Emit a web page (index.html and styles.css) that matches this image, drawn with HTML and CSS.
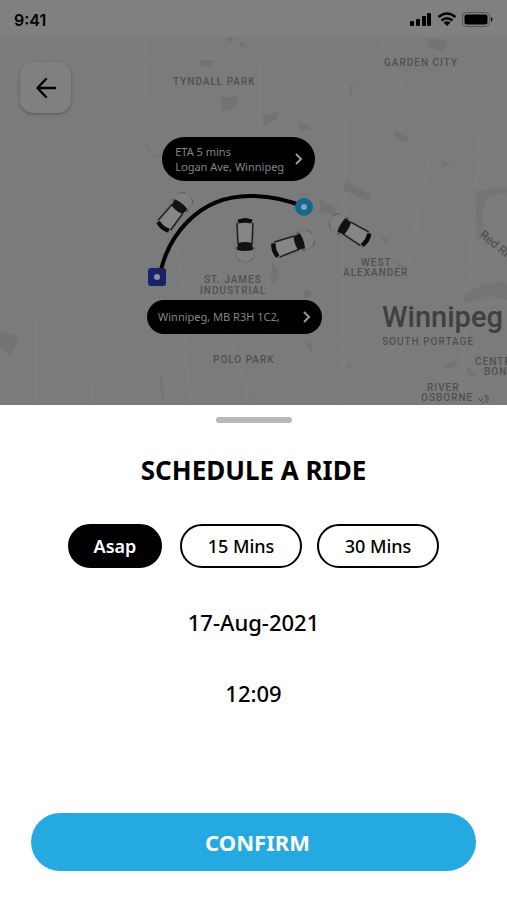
FILE: index.html
```html
<!DOCTYPE html>
<html lang="en">
<head>
<meta charset="utf-8">
<meta name="viewport" content="width=device-width, initial-scale=1">
<title>Schedule a ride</title>
<link rel="stylesheet" href="styles.css">
</head>
<body>
<main class="screen">
  <section class="map" aria-label="Map">
    <svg class="map-art" viewBox="0 0 507 405" preserveAspectRatio="xMidYMid slice">
      <defs>
        <g id="car">
          <path d="M-8 -20Q0 -24 8 -20L9 10Q10 17 6 21Q0 23 -6 21Q-10 17 -9 10Z" fill="#7f7f7f" stroke="#6c6c6c" stroke-width=".6"/>
          <path d="M-7 -20Q0 -23 7 -20L6 -17Q0 -19 -6 -17Z" fill="#0b0b0b" stroke="#0b0b0b"/>
          <path d="M-8 -17L-7 4M8 -17L7 4" stroke="#202020" stroke-width="1.5"/>
          <path d="M-6 -16Q0 -18 6 -16V3H-6Z" fill="#868686"/>
          <path d="M-7 3Q0 1 7 3L8 10Q0 12 -8 10Z" fill="#111"/>
          <path d="M-8 7L-10 9M8 7L10 9" stroke="#444" stroke-width="1"/>
          <path d="M-8 18Q-7 20 -4 21M8 18Q7 20 4 21" fill="none" stroke="#505050" stroke-width=".7"/>
        </g>
      </defs>
      <rect width="507" height="405" fill="#7b7b7b"/>
      <g fill="none" stroke="#7e7e7e" stroke-width="2">
        <path d="M147 36V94L172 118M0 92L48 50L90 58H300M260 56V130M0 318H36V405M36 364H62M92 380V405"/>
        <path d="M320 72L390 108L507 140M345 120L342 405M300 145L420 190L507 270M480 130L460 405M200 350L300 330L380 355L440 320"/>
        <path d="M380 36L430 150L410 260L450 330M280 390L360 340L507 300M170 130L190 405M230 330L250 405"/>
      </g>
      <g fill="#737373">
        <path d="M430 38L448 41L444 52L427 46Z"/>
        <path d="M262 116L279 112L276 120L264 126ZM298 120L312 128L300 132ZM350 86L354 85L350 101ZM225 38L233 36L232 43ZM238 41L245 44L242 49ZM200 61L213 60L212 67L201 66ZM221 97L238 97L235 108L222 112Z"/>
        <path d="M345 181L371 194L370 202L343 190ZM320 199L336 208L334 215L320 211ZM395 131L409 137L407 143L394 136ZM440 161L450 163L445 167Z"/>
        <path d="M0 332L18 336L16 346L10 355L0 347ZM380 236L390 240L386 244ZM392 260L411 269L400 268Z"/>
        <path d="M445 366L456 360L458 365L447 370ZM465 365L477 374L470 378ZM346 365L352 363L350 371ZM304 290H311V298H304ZM306 344L312 342V354ZM272 260L280 275L271 286Z"/>
      </g>
      <g fill="#757575">
        <path d="M475 190L507 188V193L488 196L482 212L484 230L492 241L478 238L476 220Z"/>
        <path d="M464 296Q485 279 507 283V300L488 296L464 303Z"/>
      </g>
      <path d="M147 146L152 154L158 158M160 375L163 398" fill="none" stroke="#737373" stroke-width="2"/>
      <rect width="507" height="37" fill="#808080"/>
      <g class="district">
        <text x="384" y="66">GARDEN CITY</text>
        <text x="173" y="85">TYNDALL PARK</text>
        <text x="204" y="283">ST. JAMES</text>
        <text x="200" y="294">INDUSTRIAL</text>
        <text x="213" y="363">POLO PARK</text>
        <text x="361" y="266">WEST</text>
        <text x="343" y="276">ALEXANDER</text>
        <text x="382" y="345">SOUTH PORTAGE</text>
        <text x="475" y="365">CENTRAL</text>
        <text x="484" y="375">BONIFACE</text>
        <text x="427" y="391">RIVER</text>
        <text x="421" y="401">OSBORNE</text>
      </g>
      <text class="city" x="382" y="327">Winnipeg</text>
      <text class="river" transform="translate(479 236) rotate(40)">Red River</text>
      <path d="M479 398Q481 404 483 398M484 396Q488 394 486 400Q484 404 482 403M486 395Q490 397 487 403" fill="none" stroke="#505050"/>
      <use href="#car" transform="translate(175 212) rotate(219)"/>
      <use href="#car" transform="translate(245 240)"/>
      <use href="#car" transform="translate(293 244) rotate(251)"/>
      <use href="#car" transform="translate(350 230) rotate(121)"/>
      <path d="M161 270C168 240 195 196 250 196C270 196 288 200 304 207" fill="none" stroke="#000" stroke-width="4"/>
      <circle cx="304" cy="207" r="9" fill="#136890"/>
      <circle cx="304" cy="207" r="3" fill="#8ca0a8"/>
      <rect x="148" y="268" width="18" height="18" rx="3" fill="#192169"/>
      <circle cx="157" cy="277" r="3" fill="#8a92a2"/>
    </svg>
    <div class="status">
      <span>9:41</span>
      <svg width="83" height="16" viewBox="0 0 83 16" aria-hidden="true">
        <rect x="0" y="9" width="4" height="5" rx="1"/><rect x="6" y="7" width="4" height="7" rx="1"/><rect x="12" y="4" width="4" height="10" rx="1"/><rect x="17" y="1" width="4" height="13" rx="1"/>
        <g fill="none" stroke="#000" stroke-width="2.4"><path d="M28.500 5Q37 -2 45.500 5"/><path d="M31.500 8.500Q37 4 42.500 8.500"/></g>
        <path d="M33.500 10.500Q37 8 40.500 10.500L37 14Z"/>
        <rect x="52.500" y="0.500" width="27" height="14" rx="4" fill="none" stroke="#555"/>
        <rect x="54.500" y="2.500" width="23" height="10" rx="2"/>
        <path d="M81 5Q84 7.500 81 10Z"/>
      </svg>
    </div>
    <button class="back" type="button" aria-label="Back">
      <svg width="20" height="20" viewBox="0 0 20 20" aria-hidden="true"><path d="M19 10H2M10 1L1.500 10L10 19" fill="none" stroke="#000" stroke-width="2.400" stroke-linecap="round" stroke-linejoin="round"/></svg>
    </button>
    <button class="place place-to" type="button">
      <span>ETA 5 mins<br>Logan Ave, Winnipeg</span>
      <svg width="8" height="12" viewBox="0 0 8 12" aria-hidden="true"><path d="M1 1L6 6L1 11"/></svg>
    </button>
    <button class="place place-from" type="button">
      <span>Winnipeg, MB R3H 1C2,</span>
      <svg width="8" height="12" viewBox="0 0 8 12" aria-hidden="true"><path d="M1 1L6 6L1 11"/></svg>
    </button>
  </section>
  <section class="sheet">
    <div class="handle"></div>
    <h1>SCHEDULE A RIDE</h1>
    <div class="options">
      <button class="option selected" type="button" aria-pressed="true">Asap</button>
      <button class="option" type="button" aria-pressed="false">15 Mins</button>
      <button class="option" type="button" aria-pressed="false">30 Mins</button>
    </div>
    <p class="when">17-Aug-2021</p>
    <p class="when">12:09</p>
    <button class="confirm" type="button">CONFIRM</button>
  </section>
</main>
</body>
</html>
```
FILE: styles.css
```css
* {
  box-sizing: border-box;
}

body {
  margin: 0;
  background: #fff;
  color: #000;
  font-family: "Noto Sans", "Open Sans", sans-serif;
}

button {
  margin: 0;
  padding: 0;
  border: 0;
  color: inherit;
  font: inherit;
  cursor: pointer;
}

.screen {
  display: flex;
  flex-direction: column;
  min-height: 100vh;
}

.map {
  position: relative;
  aspect-ratio: 507 / 405;
  overflow: hidden;
  background: #7b7b7b;
}

.map-art {
  position: absolute;
  inset: 0;
  width: 100%;
  height: 100%;
}

.district {
  fill: #505050;
  font: 500 10px Roboto, sans-serif;
  letter-spacing: 1px;
}

.city {
  fill: #404040;
  font: 500 29px Roboto, sans-serif;
}

.river {
  fill: #4c4c4c;
  font: 12px Roboto, sans-serif;
}

.status {
  position: relative;
  display: flex;
  align-items: center;
  justify-content: space-between;
  height: 40px;
  padding: 0 14px;
  font: 600 16px Inter, sans-serif;
}

.back {
  position: relative;
  display: grid;
  place-items: center;
  width: 51px;
  height: 51px;
  margin: 22px 20px;
  border-radius: 13px;
  background: #808080;
  box-shadow: 0 1px 3px rgba(0, 0, 0, 0.3);
}

.place {
  position: absolute;
  display: flex;
  align-items: center;
  justify-content: space-between;
  border-radius: 22px;
  background: #000;
  color: #858585;
  font-size: 11px;
  line-height: 15px;
  text-align: left;
  white-space: nowrap;
}

.place path {
  fill: none;
  stroke: #999;
  stroke-width: 2;
}

.place-to {
  left: 32%;
  top: 34%;
  width: 153px;
  height: 44px;
  margin-top: -1px;
  padding: 0 12px 0 13px;
}

.place-from {
  left: 29%;
  top: 74%;
  width: 175px;
  height: 34px;
  padding: 0 11px;
}

.sheet {
  display: flex;
  flex: 1;
  flex-direction: column;
  align-items: center;
  padding: 12px 31px 29px;
}

.handle {
  width: 76px;
  height: 6px;
  border-radius: 3px;
  background: #b8b8b8;
}

h1 {
  margin: 29px 0 36px;
  font-size: 26px;
  font-weight: 700;
  line-height: 36px;
}

.options {
  display: flex;
  gap: 15px;
  margin-bottom: 38px;
}

.option {
  width: 122px;
  height: 44px;
  border: 2px solid #000;
  border-radius: 22px;
  background: #fff;
  font-size: 18px;
  font-weight: 500;
}

.option.selected {
  width: 94px;
  margin-right: 3px;
  background: #000;
  color: #fff;
  font-weight: 600;
}

.when {
  margin: 0 0 39px;
  font-size: 22px;
  font-weight: 500;
  line-height: 32px;
}

.confirm {
  align-self: stretch;
  height: 58px;
  margin-top: auto;
  padding-left: 8px;
  border-radius: 29px;
  background: #25a9e1;
  color: #fff;
  font-size: 22px;
  font-weight: 700;
}
```
